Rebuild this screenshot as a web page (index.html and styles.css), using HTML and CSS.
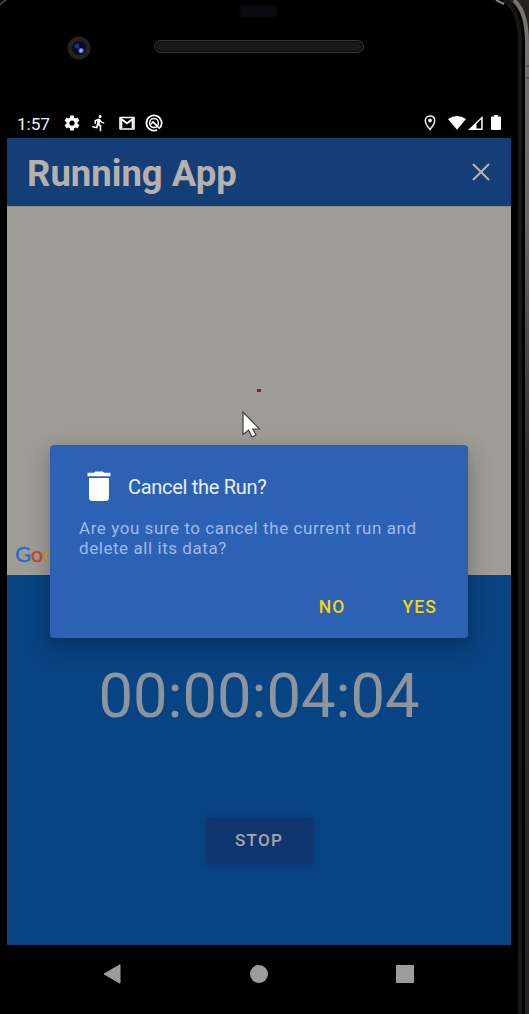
FILE: index.html
```html
<!DOCTYPE html>
<html lang="en">
<head>
<meta charset="utf-8">
<title>Running App</title>
<link rel="stylesheet" href="styles.css">
</head>
<body>
<div class="phone">
  <svg class="frame" width="529" height="1014" viewBox="0 0 529 1014">
    <defs>
      <linearGradient id="edge" x1="0" y1="0" x2="0" y2="1">
        <stop offset="0" stop-color="#77736f"/><stop offset=".22" stop-color="#686563"/><stop offset=".45" stop-color="#302e2d"/><stop offset="1" stop-color="#262423"/>
      </linearGradient>
    </defs>
    <path d="M507 0h22v40Q523 8 507 0z" fill="#242322"/>
    <path d="M514 0Q527 12 527 43V1014" fill="none" stroke="url(#edge)" stroke-width="4"/>
    <path d="M503 0Q519 8 520 40V1014" fill="none" stroke="#171615" stroke-width="4"/>
    <path d="M496 0l8 4" stroke="#85817c" stroke-width="2"/>
    <path d="M526 66h3M526 78h3" stroke="#3b3937" stroke-width="1"/>
    <path d="M0 5Q2 2 6 0" fill="none" stroke="#4c4947" stroke-width="1.500"/>
  </svg>
  <header class="bezel">
    <span class="sensor"></span>
    <svg class="camera" width="24" height="24" viewBox="0 0 24 24"><circle cx="12" cy="12" r="11.5" fill="#24211f"/><circle cx="12" cy="12" r="7" fill="#090b22"/><circle cx="10" cy="10" r="2.5" fill="#202f79"/><circle cx="14" cy="14.500" r="2.600" fill="#536de3"/><circle cx="14" cy="14.500" r="1.200" fill="#b5c0ff"/></svg>
    <span class="speaker"></span>
  </header>
  <div class="status">
    <span class="clock">1:57</span>
    <svg class="settings" width="18" height="18" viewBox="0 0 24 24"><path fill="#fff" d="M19.430 12.980c.04-.32.070-.64.070-.98s-.03-.66-.07-.98l2.110-1.650c.19-.15.240-.42.120-.64l-2-3.460c-.12-.22-.39-.3-.61-.22l-2.490 1c-.52-.4-1.080-.73-1.690-.98l-.38-2.650A.488.488 0 0014 2h-4c-.25 0-.46.180-.49.420l-.38 2.650c-.61.250-1.170.59-1.690.98l-2.490-1c-.23-.09-.49 0-.61.220l-2 3.460c-.13.220-.07.490.12.640l2.110 1.650c-.04.320-.07.650-.07.980s.03.660.070.980l-2.110 1.650c-.19.150-.24.420-.12.640l2 3.460c.12.220.39.300.61.220l2.490-1c.52.400 1.080.730 1.690.980l.38 2.650c.03.240.24.420.490.420h4c.25 0 .46-.18.490-.42l.38-2.650c.61-.25 1.170-.59 1.690-.98l2.490 1c.23.090.49 0 .61-.22l2-3.460c.12-.22.070-.49-.12-.64zM12 15.500A3.500 3.500 0 1112 8.500a3.500 3.500 0 010 7z"/></svg>
    <svg class="runner" width="18" height="18" viewBox="0 0 24 24"><path fill="#fff" d="M13.490 5.480a2 2 0 100-4 2 2 0 000 4zM9.890 19.380l1-4.400 2.100 2v6h2v-7.500l-2.100-2 .6-3c1.300 1.500 3.300 2.500 5.500 2.500v-2c-1.900 0-3.500-1-4.300-2.400l-1-1.600c-.4-.6-1-1-1.700-1-.3 0-.5.1-.8.1l-5.200 2.200v4.700h2v-3.400l1.800-.7-1.600 8.100-4.900-1-.4 2z"/></svg>
    <svg class="gmail" width="18" height="18" viewBox="0 0 18 18"><rect x="2" y="3.500" width="14" height="11.500" rx=".6" fill="none" stroke="#fff" stroke-width="1.600"/><path d="M3.400 14V5L9 9.300 14.600 5v9" fill="none" stroke="#fff" stroke-width="1.800"/></svg>
    <svg class="debug" width="18" height="18" viewBox="0 0 18 18"><path d="M12.200 15.900A7.600 7.600 0 1115 13.700" fill="none" stroke="#fff" stroke-width="1.700"/><circle cx="9" cy="9" r="4.400" fill="none" stroke="#fff" stroke-width="1.500"/><path d="M5.500 10.500L8 8l6.800 6.700" fill="none" stroke="#fff" stroke-width="1.700"/></svg>
    <svg class="pin" width="12" height="18" viewBox="0 0 12 18"><path d="M6 2C3 2 1.300 4.100 1.300 6.500 1.300 9.900 6 15.500 6 15.500s4.700-5.600 4.700-9C10.700 4.100 9 2 6 2z" fill="none" stroke="#eee" stroke-width="1.500"/><circle cx="6" cy="6.500" r="1.900" fill="#eee"/></svg>
    <svg class="signals" width="36" height="18" viewBox="0 0 36 18"><path fill="#fff" d="M0 5Q9-1 18 5L9 15.800z"/><path fill="#fff" fill-rule="evenodd" d="M20 16L34.700 2v14zM28.500 9.700V14.600h4.700V5.200z"/></svg>
    <svg class="battery" width="10" height="18" viewBox="0 0 10 18"><path fill="#fff" d="M3 1h4v1.500h2q1 0 1 1V15q0 1-1 1H1q-1 0-1-1V3.500q0-1 1-1h2z"/></svg>
  </div>
  <main class="screen">
    <div class="appbar"><h1>Running App</h1>
      <svg width="20" height="20" viewBox="0 0 20 20"><path d="M2 2l16 16M18 2L2 18" stroke="#b9b5b5" stroke-width="2"/></svg>
    </div>
    <section class="map">
      <span class="marker"></span>
      <div class="google"><span class="g-blue">G</span><span class="g-red">o</span><span class="g-yellow">o</span></div>
    </section>
    <section class="tracker"><time>00:00:04:04</time><button class="stop">STOP</button></section>
    <div class="dialog" role="dialog">
      <div class="dialog-title">
        <svg width="24" height="30" viewBox="0 0 24 30"><path fill="#fff" d="M.5 1.800H7L8.300.5h7.400L17 1.800h6.500v3.500H.5zM2 7h20v19.500Q22 30 18.500 30h-13Q2 30 2 26.500z"/></svg>
        <h2>Cancel the Run?</h2>
      </div>
      <p>Are you sure to cancel the current run and<br>delete all its data?</p>
      <div class="actions"><button>NO</button><button>YES</button></div>
    </div>
    <svg class="cursor" width="20" height="30" viewBox="0 0 20 30"><path d="M1 1v22.500l5.500-4.300L10 26l4-2-3.200-6H17.500z" fill="#fff" stroke="#444" stroke-width="1.200"/></svg>
  </main>
  <nav class="navbar">
    <svg width="18" height="20" viewBox="0 0 18 20"><path d="M1 10L17 .8v18.400z" fill="#9c9c9c" stroke="#9c9c9c" stroke-width="1" stroke-linejoin="round"/></svg>
    <span class="home"></span><span class="recent"></span>
  </nav>
</div>
</body>
</html>
```

FILE: styles.css
```css
* { box-sizing: border-box; }
body { margin: 0; background: #000; font-family: Roboto, sans-serif; }
h1, h2, p { margin: 0; }
button { border: 0; background: none; padding: 0; font-family: inherit; }
svg { display: block; flex: none; }
.phone { position: relative; width: 529px; height: 1014px; overflow: hidden; background: #000; }
.frame { position: absolute; inset: 0; }
.bezel { position: relative; height: 108px; display: flex; align-items: flex-start; padding: 36px 0 0 67px; }
.sensor { position: absolute; left: 240px; top: 5px; width: 37px; height: 12px; background: #0b0b0f; filter: blur(1px); }
.speaker { width: 210px; height: 13px; margin: 4px 0 0 63px; border: 1px solid #373634; border-radius: 7px; background: #191817; box-shadow: inset 0 0 1px 1px #0b0b0b; }
.status { position: relative; width: 503px; height: 30px; margin-left: 7px; padding-left: 10px; display: flex; align-items: center; color: #eee; }
.clock { width: 33px; font-size: 17.300px; letter-spacing: -.1px; white-space: nowrap; padding-top: 1px; }
.settings { margin-left: 13px; }
.runner { margin-left: 9px; }
.gmail { margin-left: 10px; }
.debug { margin-left: 9px; }
.pin { margin-left: auto; }
.signals { margin-left: 12px; }
.battery { margin: 0 9px 0 7px; }
.screen { position: relative; width: 504px; height: 807px; margin-left: 7px; background: #084383; }
.appbar { height: 68px; display: flex; align-items: center; justify-content: space-between; padding: 0 20px; background: #153e77; }
.appbar h1 { font-size: 36.500px; line-height: 42px; font-weight: 700; letter-spacing: 0; color: #b5b1ad; padding-top: 4px; }
.map { position: relative; height: 369px; background: #9e9c97; border-top: 1px solid #8c8e8b; }
.marker { position: absolute; left: 250px; top: 182px; width: 4px; height: 3px; background: #a41414; box-shadow: 0 0 1px #b66; }
.google { position: absolute; left: 8px; top: 334px; font: 22px/26px Lato, sans-serif; letter-spacing: -.3px; -webkit-text-stroke: .3px; }
.g-blue { color: #286bc6; }
.g-red { color: #c74434; }
.g-yellow { color: #d29c20; }
.tracker { height: 370px; display: flex; flex-direction: column; align-items: center; padding-top: 85px; }
.tracker time { font-size: 61.500px; line-height: 72px; color: #8c959f; letter-spacing: 0; }
.stop { width: 107px; height: 46px; margin-top: 85px; border-radius: 4px; background: #10366f; box-shadow: 0 1px 4px 1px #0b3976; color: #a5a7a9; font-size: 17px; font-weight: 500; letter-spacing: 1.300px; }
.dialog { position: absolute; left: 43px; top: 306.500px; width: 418px; height: 193px; border-radius: 4px; background: #2d61b4; box-shadow: 0 9px 22px 3px rgb(0 0 0 / 20%), 0 3px 7px rgb(0 0 0 / 8%); padding: 26px 31px 0 29px; }
.dialog-title { display: flex; align-items: center; gap: 17px; padding-left: 8px; height: 31px; }
.dialog h2 { font-size: 20px; line-height: 26px; font-weight: 400; letter-spacing: -.3px; color: #e8effb; padding-top: 2px; }
.dialog p { font-size: 17px; line-height: 20px; letter-spacing: .560px; color: #9cbbef; margin-top: 16px; white-space: nowrap; }
.actions { display: flex; justify-content: flex-end; gap: 57px; margin-top: 37px; }
.actions button { color: #f3d60e; font-size: 17.500px; line-height: 24px; font-weight: 500; letter-spacing: 1.100px; }
.cursor { position: absolute; left: 235px; top: 273px; }
.navbar { position: relative; width: 504px; height: 58px; margin-left: 7px; padding: 0 97px 0 96px; display: flex; justify-content: space-between; align-items: center; }
.home { width: 18px; height: 18px; border-radius: 50%; background: #9c9c9c; }
.recent { width: 18px; height: 18px; border-radius: 1px; background: #9c9c9c; }
```
